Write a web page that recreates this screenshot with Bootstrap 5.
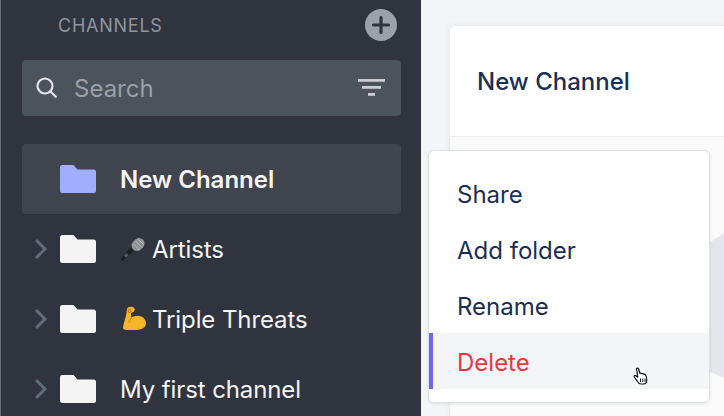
<!DOCTYPE html>
<html lang="en">
<head>
<meta charset="utf-8">
<title>Channels</title>
<link href="https://cdn.jsdelivr.net/npm/bootstrap@5.3.0/dist/css/bootstrap.min.css" rel="stylesheet">
<style>
html,body{height:416px;overflow:hidden;margin:0;}
body{font-family:Inter,"Liberation Sans",sans-serif;background:#f4f5f7;}
.stage{height:416px;width:724px;overflow:hidden;position:relative;}
.side{width:421px;flex:none;background:#30343e;border-left:1px solid #6b6e74;padding:0 20px 0 21px;}
.side-head{height:60px;padding-left:36px;padding-right:4px;padding-bottom:10px;}
.side-title{font-size:18px;letter-spacing:.75px;color:#8f959e;line-height:1;padding-top:2px;}
.add-btn{width:32px;height:32px;border-radius:50%;background:#9aa1ab;}
.search-box{height:56px;background:#4b535d;border-radius:4px;padding:0 15px 0 14px;margin-bottom:28px;}
.search-text{font-size:24px;color:#99a0a8;margin-left:16px;line-height:1;padding-top:2px;}
.chan{height:70px;border-radius:4px;color:#f4f4f5;font-size:24px;letter-spacing:-.1px;padding-left:12px;}
.chan span:not(.chev){padding-top:2px;}
.chan-on{background:#3f444e;font-weight:600;letter-spacing:0;}
.chev{width:14px;flex:none;}
.fold{margin-left:12px;margin-right:24px;flex:none;}
.emo{margin-right:4px;flex:none;}
.main-area{flex:1;padding:25px 0 0 28px;}
.panel{background:#fafafa;border:1px solid #e8ebee;border-right:0;border-radius:6px 0 0 0;height:400px;box-shadow:0 0 6px rgba(60,70,90,.06);}
.panel-head{height:111px;padding-left:27px;padding-top:2px;background:#fff;border-bottom:1px solid #eef0f2;border-radius:6px 0 0 0;font-size:24px;font-weight:500;color:#1a2f55;}
.hexa{position:absolute;left:700px;top:233px;width:24px;height:145px;background:#e3e6ec;clip-path:polygon(100% 0,0 11%,0 93%,100% 100%);}
.ctx{position:absolute;left:428px;top:150px;width:282px;height:253px;background:#fff;border:1px solid #dfe3e8;border-radius:6px;padding:14px 0 0;box-shadow:0 1px 3px rgba(60,70,90,.12);}
.ctx-item{height:56px;padding-left:28px;padding-top:4px;font-size:24px;color:#1a2f55;display:flex;align-items:center;}
.ctx-danger{background:#f4f5f7;color:#f5333f;border-left:4px solid #6a67f0;padding-left:24px;}
.pointer{position:absolute;left:633px;top:367px;}
</style>
</head>
<body>
<div class="stage d-flex">
  <aside class="side">
    <div class="side-head d-flex align-items-center justify-content-between">
      <span class="side-title">CHANNELS</span>
      <span class="add-btn d-flex align-items-center justify-content-center">
        <svg width="20" height="20" viewBox="0 0 20 20"><path d="M10 2.500v15M2.500 10h15" stroke="#30343e" stroke-width="3.200" stroke-linecap="round"/></svg>
      </span>
    </div>
    <div class="search-box d-flex align-items-center">
      <svg width="22" height="22" viewBox="0 0 22 22" fill="none" stroke="#e4e6e8" stroke-width="2.200" stroke-linecap="round"><circle cx="9" cy="9" r="7.500"/><path d="M14.800 14.800l5 5"/></svg>
      <span class="search-text flex-grow-1">Search</span>
      <svg width="28" height="20" viewBox="0 0 28 20" fill="#c9ccd0"><rect x="0" y="1" width="27" height="2.800"/><rect x="4" y="8" width="19" height="2.800"/><rect x="10" y="15" width="7" height="2.800"/></svg>
    </div>
    <div class="chan chan-on d-flex align-items-center">
      <span class="chev"></span>
      <svg class="fold" width="36" height="28" viewBox="0 0 36 28"><path d="M2.500 0h11l4 4.500h16a2.500 2.500 0 0 1 2.500 2.500v18.500a2.500 2.500 0 0 1-2.500 2.500h-31a2.500 2.500 0 0 1-2.500-2.500v-23a2.500 2.500 0 0 1 2.500-2.500z" fill="#a0aeff"/></svg>
      <span>New Channel</span>
    </div>
    <div class="chan d-flex align-items-center">
      <svg class="chev" width="14" height="24" viewBox="0 0 14 24" fill="none" stroke="#5f6c79" stroke-width="3"><path d="M2 3l9 9-9 9"/></svg>
      <svg class="fold" width="36" height="28" viewBox="0 0 36 28"><path d="M2.500 0h11l4 4.500h16a2.500 2.500 0 0 1 2.500 2.500v18.500a2.500 2.500 0 0 1-2.500 2.500h-31a2.500 2.500 0 0 1-2.500-2.500v-23a2.500 2.500 0 0 1 2.500-2.500z" fill="#f4f4f4"/></svg>
      <svg class="emo" width="28" height="26" viewBox="0 0 28 26"><path d="M.500 23L2.500 25 16 12.500 12.500 9z" fill="#1d2024"/><path d="M4 19.500l2 2 2.500-2.200-2-2z" fill="#5a5d63"/><rect x="12.500" y="1.500" width="11" height="14" rx="5.500" transform="rotate(45 18 8.500)" fill="#8d9095"/><path d="M13.500 8l6 6M15.500 5l7 7M18 3l6 6" stroke="#b9bbbf" stroke-width="1"/></svg>
      <span>Artists</span>
    </div>
    <div class="chan d-flex align-items-center">
      <svg class="chev" width="14" height="24" viewBox="0 0 14 24" fill="none" stroke="#5f6c79" stroke-width="3"><path d="M2 3l9 9-9 9"/></svg>
      <svg class="fold" width="36" height="28" viewBox="0 0 36 28"><path d="M2.500 0h11l4 4.500h16a2.500 2.500 0 0 1 2.500 2.500v18.500a2.500 2.500 0 0 1-2.500 2.500h-31a2.500 2.500 0 0 1-2.500-2.500v-23a2.500 2.500 0 0 1 2.500-2.500z" fill="#f4f4f4"/></svg>
      <svg class="emo" width="28" height="26" viewBox="0 0 28 26"><path d="M8 1.500C10 .3 13.500 .3 14.500 2.500c.8 1.800-.3 3.200-1.800 3.800l-1.700 1 .3 4.500c1.500-1.300 3.700-2 6.200-2 4.500 0 8.500 3 8.500 7.500 0 4.500-4.500 6.700-10 6.700H6.500C4 24 2.800 23 3 21.500 3.500 17 6 11 6.500 7c.2-2.500.2-4.300 1.500-5.500z" fill="#f6b42a"/><path d="M9.500 3.500a1.500 1.500 0 1 0 .1 0" fill="none" stroke="#c07c10" stroke-width="1.100"/><path d="M11.300 12c-1.200 1.500-2.300 3.500-2.500 5" fill="none" stroke="#d99418" stroke-width="1.100"/></svg>
      <span>Triple Threats</span>
    </div>
    <div class="chan d-flex align-items-center">
      <svg class="chev" width="14" height="24" viewBox="0 0 14 24" fill="none" stroke="#5f6c79" stroke-width="3"><path d="M2 3l9 9-9 9"/></svg>
      <svg class="fold" width="36" height="28" viewBox="0 0 36 28"><path d="M2.500 0h11l4 4.500h16a2.500 2.500 0 0 1 2.500 2.500v18.500a2.500 2.500 0 0 1-2.500 2.500h-31a2.500 2.500 0 0 1-2.500-2.500v-23a2.500 2.500 0 0 1 2.500-2.500z" fill="#f4f4f4"/></svg>
      <span>My first channel</span>
    </div>
  </aside>
  <main class="main-area">
    <div class="panel">
      <div class="panel-head d-flex align-items-center">New Channel</div>
    </div>
  </main>
  <div class="hexa"></div>
  <div class="ctx">
    <div class="ctx-item">Share</div>
    <div class="ctx-item">Add folder</div>
    <div class="ctx-item">Rename</div>
    <div class="ctx-item ctx-danger">Delete</div>
  </div>
  <svg class="pointer" width="16" height="19" viewBox="0 0 16 19"><path d="M3.500 1.500c1-.8 2 0 2.300 1L7 6.500c.8-.5 1.500-.3 2 .3.700-.3 1.400 0 1.700.5.700-.2 1.500.1 1.900.7.800 1.400 1.200 3.500 1.200 5.500 0 2-1.200 3.500-3.300 3.500H8c-1.500 0-2.500-1-3.300-2.300L1.200 10c-.5-.9.600-2 1.600-1.300l2 1.500z" fill="#fff" stroke="#111" stroke-width="1.200" stroke-linejoin="round"/><path d="M7.500 11.500v3.500M9.800 11.500v3.500M12 11.500v3.500" stroke="#111" stroke-width="1"/></svg>
</div>
</body>
</html>
